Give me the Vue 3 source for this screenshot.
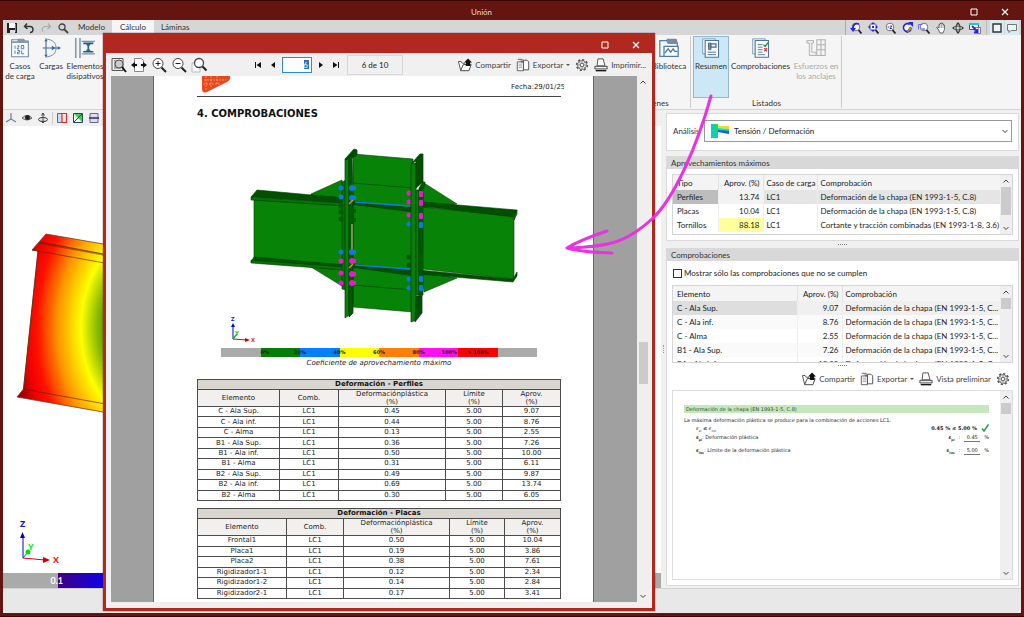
<script setup>
import { ref } from 'vue'

const title = 'Unión'
const onlyFailed = ref(false)
const page = ref('6')

const viewTools = ['zprev', 'zfit', 'zminus2', 'redraw', 'zwin', 'hand', 'orbit', 'export']
const sceneTools = ['axes', 'eye', 'turn']
const clipTools = ['clipred', 'clipgreen', 'clipblue']
const pageTools = [
  ['pageview', 'Página completa'],
  ['pagewidth', 'Ancho de página'],
  ['zin', 'Acercar'],
  ['zout', 'Alejar'],
  ['zpage', 'Zoom'],
]

const summary = [
  { tipo: 'Perfiles', aprov: '13.74', caso: 'LC1', comp: 'Deformación de la chapa (EN 1993-1-5, C.8)' },
  { tipo: 'Placas', aprov: '10.04', caso: 'LC1', comp: 'Deformación de la chapa (EN 1993-1-5, C.8)' },
  { tipo: 'Tornillos', aprov: '88.18', caso: 'LC1', comp: 'Cortante y tracción combinadas (EN 1993-1-8, 3.6)' },
]

const checks = [
  ['C - Ala Sup.', '9.07'],
  ['C - Ala inf.', '8.76'],
  ['C - Alma', '2.55'],
  ['B1 - Ala Sup.', '7.26'],
  ['B1 - Ala inf.', '10.00'],
]

const reports = [
  {
    name: 'Deformación - Perfiles',
    kind: 'profiles',
    rows: [
      ['C - Ala Sup.', '0.45', '9.07'],
      ['C - Ala inf.', '0.44', '8.76'],
      ['C - Alma', '0.13', '2.55'],
      ['B1 - Ala Sup.', '0.36', '7.26'],
      ['B1 - Ala inf.', '0.50', '10.00'],
      ['B1 - Alma', '0.31', '6.11'],
      ['B2 - Ala Sup.', '0.49', '9.87'],
      ['B2 - Ala inf.', '0.69', '13.74'],
      ['B2 - Alma', '0.30', '6.05'],
    ],
  },
  {
    name: 'Deformación - Placas',
    kind: 'plates',
    rows: [
      ['Frontal1', '0.50', '10.04'],
      ['Placa1', '0.19', '3.86'],
      ['Placa2', '0.38', '7.61'],
      ['Rigidizador1-1', '0.12', '2.34'],
      ['Rigidizador1-2', '0.14', '2.84'],
      ['Rigidizador2-1', '0.17', '3.41'],
    ],
  },
]

const bolts = [
  [341, 188, 'b'], [341, 197, 'b'], [341, 206, 'd'], [341, 212, 'd'], [341, 219, 'd'], [341, 252, 'b'], [341, 261, 'p'], [341, 273, 'p'], [341, 283, 'p'],
  [409, 193, 'p'], [409, 202, 'p'], [409, 215, 'p'], [409, 224, 'b'], [409, 257, 'd'], [409, 265, 'd'], [409, 279, 'b'], [409, 288, 'b'],
]
const frontBolts = [
  [352, 188, 'b'], [352, 198, 'b'], [352, 211, 'd'], [352, 220, 'd'], [352, 252, 'b'], [352, 261, 'p'], [352, 274, 'p'], [352, 283, 'p'],
]
const rightBolts = [
  [421, 194, 'p'], [421, 203, 'p'], [421, 216, 'p'], [421, 225, 'b'], [421, 257, 'd'], [421, 266, 'd'], [421, 279, 'b'], [421, 288, 'b'],
]
</script>

<template>
  <div class="window">
    <svg class="sprite" aria-hidden="true">
      <symbol id="save" viewBox="0 0 12 12"><path d="M1 1h10v10H1z" fill="#222" /><path d="M3 1h6v5H3z" fill="#fff" /><path d="M4 8h5v3H4z" fill="#ddd" /><path d="M9 2h1v8H9z" fill="#8a8a20" /></symbol>
      <symbol id="undo" viewBox="0 0 12 12"><path d="M4 1.5 1.5 4.5l3 2.500M2 4.500h5a3 3 0 0 1 0 6" fill="none" stroke="#333" stroke-width="1.400" /></symbol>
      <symbol id="redo" viewBox="0 0 12 12"><path d="M8 1.500l2.500 3-3 2.500M10 4.500H5a3 3 0 0 0-2 5" fill="none" stroke="#aaa" stroke-width="1.200" /></symbol>
      <symbol id="search" viewBox="0 0 12 12"><circle cx="5" cy="5" r="3" fill="none" stroke="#444" stroke-width="1.300" /><path d="M7 7l4 4" stroke="#444" stroke-width="1.800" /></symbol>
      <symbol id="lens" viewBox="0 0 12 12"><circle cx="6" cy="5" r="3.800" fill="#fff" stroke="#777" /><path d="M8.500 8l3 3.500" stroke="#222" stroke-width="1.800" /></symbol>
      <symbol id="zprev" viewBox="0 0 12 12"><use href="#lens" /><path d="M9 2Q3 0 3 7" fill="none" stroke="#22e" stroke-width="1.800" /><path d="M0 6h6L3 10z" fill="#22e" /></symbol>
      <symbol id="zfit" viewBox="0 0 12 12"><use href="#lens" /><path d="M6 0l2 2.500H4zM6 10l2-2.500H4zM1 5l2.500-2v4zM11 5L8.500 3v4zM5 4h2v2H5z" fill="#22e" /></symbol>
      <symbol id="zminus2" viewBox="0 0 12 12"><use href="#lens" /><path d="M3.500 5h2M6 4h2L6 6.500h2" fill="none" stroke="#22e" stroke-width=".9" /></symbol>
      <symbol id="redraw" viewBox="0 0 12 12"><path d="M9 2.500a4 4 0 1 0 1 5" fill="#fff" stroke="#22e" stroke-width="1.600" /><path d="M7 0h5v5z" fill="#22e" /><path d="M5.500 10.500 9 5l2 1.500-4 4z" fill="#c92" stroke="#433" stroke-width=".6" /></symbol>
      <symbol id="zwin" viewBox="0 0 12 12"><use href="#lens" /><path d="M.5 7.500V2.500h4" fill="none" stroke="#55f" stroke-width=".8" /><path d="M3 6h4v2H3z" fill="#99f" /></symbol>
      <symbol id="hand" viewBox="0 0 12 12"><path d="M3 7 1.500 5.500l1-.5L4 6V2.500h1V1.500h1.200V1h1.200v1h1v1h1v4.500L8 11H5z" fill="#fff" stroke="#444" stroke-width=".8" /><path d="M5 3v3M6.500 2v4M8 3v3" stroke="#777" stroke-width=".6" /></symbol>
      <symbol id="orbit" viewBox="0 0 12 12"><ellipse cx="6" cy="6" rx="4.500" ry="2" fill="none" stroke="#444" /><ellipse cx="6" cy="6" rx="2" ry="4.500" fill="none" stroke="#444" /><path d="M6 0l2 2.500H4zM6 12l2-2.500H4zM0 6l2-1.500v3zM12 6l-2-1.500v3z" fill="#333" /></symbol>
      <symbol id="export" viewBox="0 0 12 12"><path d="M.5 1.500h9v6h-9z" fill="#fff" stroke="#459" /><path d="M0 1h10v2H0z" fill="#28c8d0" /><path d="M5.500 5.500h6v6h-6z" fill="#fff" stroke="#555" stroke-width=".7" /><path d="M3 4l5 5" stroke="#22e" stroke-width="1.800" /><path d="M9.500 6v5h-5z" fill="#22e" /></symbol>
      <symbol id="panel" viewBox="0 0 12 12"><path d="M2 2h8v8H2z" fill="#eef4f6" stroke="#333" stroke-width="1.400" /></symbol>
      <symbol id="chat" viewBox="0 0 12 12"><path d="M1.500 2.500h9v6H5L3 10.500v-2H1.500z" fill="#edf5f8" stroke="#777" /></symbol>
      <symbol id="cases" viewBox="0 0 24 24"><path d="M2 22.500V2h8l2 2h10v18.500z" fill="#fff" stroke="#6a8cb0" stroke-width="1.300" /><path d="M9 1h8l1 2h4v3H2V4h7z" fill="#8498ac" /><path d="M6 9v4M8.500 9.500h2.500L8.500 13H11M13.500 9h3v4h-3zM6 15v4M9 15h2.500v2H9v2h2.500M14 15v4h3" fill="none" stroke="#2868a8" /></symbol>
      <symbol id="loads" viewBox="0 0 24 24"><path d="M5 1C15 2 18 6 18 12S15 22 5 23" fill="none" stroke="#7890a8" stroke-width="1.200" /><path d="M6 2v20M2 12h20" stroke="#38699c" stroke-width="1.300" /><path d="M4 4l2-3 2 3zM4 20l2 3 2-3zM20 10l4 2-4 2zM13 9l4 3-4 3z" fill="#38699c" /></symbol>
      <symbol id="damper" viewBox="0 0 24 24"><path d="M1 0v24M6 0v24" stroke="#5c7890" stroke-width="1.400" /><path d="M8 4h16M8 19h16" stroke="#7e91a3" stroke-width="1.300" /><path d="M10 6.500h12M10 16.500h12" stroke="#205590" stroke-width="2" /><path d="M13 7h6l-2 3v3l2 3h-6l2-3v-3z" fill="#2c679e" /></symbol>
      <symbol id="library" viewBox="0 0 24 24"><path d="M1 22V3h8l2 3h11v16z" fill="#f2f8fc" stroke="#537fa9" stroke-width="1.500" /><path d="M9 1h12l2 6H11z" fill="#788b9e" /><path d="M6 10h17v12H6z" fill="#fff" stroke="#4c7aa5" stroke-width="1.500" /><path d="M7 18l4-5 3 4 3-4 2 3h3" fill="none" stroke="#47779d" stroke-width="1.500" /></symbol>
      <symbol id="sheet" viewBox="0 0 24 24"><path d="M2 1h15v18H2z" fill="#eef5fa" stroke="#7790a9" /><path d="M5 3h16v20H5z" fill="#fff" stroke="#4c7398" stroke-width="1.300" /></symbol>
      <symbol id="summary" viewBox="0 0 24 24"><use href="#sheet" /><path d="M9 6h3v8H9z" fill="#7991aa" stroke="#3f6085" /><path d="M12 7h6v4h-6z" fill="#fff" stroke="#43698f" stroke-width="1.400" /><path d="M8 17h10M8 20h10" stroke="#4c7398" stroke-width="1.200" /></symbol>
      <symbol id="checks" viewBox="0 0 24 24"><use href="#sheet" /><path d="M8 8h6M8 11h6M8 14h6M8 17h6M8 20h9" stroke="#637f9a" stroke-width="1.200" /><path d="M15 8l2 2 4-5" fill="none" stroke="#24a345" stroke-width="1.800" /><path d="M16 12l3 4M19 12l-3 4" stroke="#dc2c36" stroke-width="1.500" /></symbol>
      <symbol id="anchor" viewBox="0 0 24 24"><path d="M1 3h8v3H7v11h5v4H4V6H1z" fill="#eee" stroke="#aaa" /><path d="M13 2h10v19H13zM18 2v19M13 8h10M13 14h10" fill="none" stroke="#b0b0b0" stroke-width="1.300" /></symbol>
      <symbol id="axes" viewBox="0 0 12 12"><path d="M6 1v6l5 3M6 7l-5 3" fill="none" stroke="#68818f" stroke-width="1.200" /></symbol>
      <symbol id="eye" viewBox="0 0 12 12"><path d="M1 6q5-5 10 0-5 4-10 0" fill="#ccc" stroke="#444" stroke-width=".8" /><circle cx="6.500" cy="5.500" r="2.500" fill="#222" /></symbol>
      <symbol id="turn" viewBox="0 0 12 12"><ellipse cx="6" cy="7.500" rx="4.500" ry="2" fill="none" stroke="#333" /><path d="M6 1v9M4.500 3.500 6 1l1.500 2.500M4 9l2 2 2-2" fill="none" stroke="#444" /></symbol>
      <symbol id="clipred" viewBox="0 0 12 12"><path d="M1.500 1.500h9v9h-9z" fill="#cde" stroke="#569" /><path d="M6 1.500h4.500v9H6z" fill="#fee" stroke="#e22" stroke-width="1.200" /></symbol>
      <symbol id="clipgreen" viewBox="0 0 12 12"><path d="M1.500 1.500h9v9h-9z" fill="#fff" stroke="#246" /><path d="M10 2v8L2 2z" fill="#4c5" /><path d="M2 10l8-8" stroke="#246" /></symbol>
      <symbol id="clipblue" viewBox="0 0 12 12"><path d="M2 1.500h8v9H2z" fill="#dde" stroke="#669" /><path d="M1 6h10" stroke="#338" stroke-width="1.600" /></symbol>
      <symbol id="zin" viewBox="0 0 16 16"><circle cx="7" cy="6.500" r="5" fill="#fff" stroke="#444" /><path d="M4.500 6.500h5M7 4v5" stroke="#222" /><path d="M10.500 10.500l4.500 4.500" stroke="#222" stroke-width="2" /></symbol>
      <symbol id="zout" viewBox="0 0 16 16"><circle cx="7" cy="6.500" r="5" fill="#fff" stroke="#444" /><path d="M4.500 6.500h5" stroke="#222" /><path d="M10.500 10.500l4.500 4.500" stroke="#222" stroke-width="2" /></symbol>
      <symbol id="zpage" viewBox="0 0 16 16"><path d="M1 6h8v9H1z" fill="#fff" stroke="#bbb" /><circle cx="8" cy="6" r="4.500" fill="#fff" stroke="#444" stroke-width="1.300" /><path d="M11.500 9.500l4 4" stroke="#222" stroke-width="2" /></symbol>
      <symbol id="pageview" viewBox="0 0 16 16"><path d="M1 1.500h11v12H1z" fill="#eee" stroke="#555" /><path d="M3 3h7v9H3z" fill="#aaa" /><circle cx="8" cy="7" r="4" fill="#ccc" stroke="#555" /><path d="M11 10l4 5" stroke="#111" stroke-width="2" /></symbol>
      <symbol id="pagewidth" viewBox="0 0 16 16"><path d="M3.500 6V1.500h7l2 2V6M3.500 10v4.500h9V10" fill="#fff" stroke="#888" /><path d="M0 8l4-3v2h2v2H4v2zM16 8l-4-3v2h-2v2h2v2z" fill="#111" /></symbol>
      <symbol id="share" viewBox="0 0 16 16"><path d="M3 14 .5 4h3l1.500 2h3" fill="#fff" stroke="#444" /><path d="M3 14.500l3-7h9l-2.500 7z" fill="#fff" stroke="#333" /><path d="M9 9V5H7l4.500-4.500L16 5h-2v4z" fill="#111" /></symbol>
      <symbol id="copy" viewBox="0 0 16 16"><path d="M1.500 4.500h7v10h-7z" fill="#fff" stroke="#555" /><path d="M8.500 2.500h4l2 2v9h-6z" fill="#fff" stroke="#444" /><path d="M3 7h4M3 9h4M3 11h4" stroke="#999" /><path d="M2 1.500h5v3M5 3l2 2 2-2" fill="none" stroke="#555" /></symbol>
      <symbol id="gear" viewBox="0 0 16 16"><circle cx="8" cy="8" r="6" fill="#eee" stroke="#555" stroke-width="2" stroke-dasharray="2.600 2" /><circle cx="8" cy="8" r="5" fill="#e8e8e8" stroke="#777" /><circle cx="8" cy="8" r="2" fill="#fff" stroke="#555" /><path d="M8 3v3M8 10v3M3 8h3M10 8h3M4.500 4.500l2 2M9.500 9.500l2 2M11.500 4.500l-2 2M6.500 9.500l-2 2" stroke="#777" stroke-width=".8" /></symbol>
      <symbol id="print" viewBox="0 0 16 16"><path d="M3.500 9l1-8h6l2 8z" fill="#fff" stroke="#444" /><path d="M1 9.500h14v3H1z" fill="#eee" stroke="#333" /><path d="M2 14.500h12" stroke="#111" stroke-width="1.500" /></symbol>
      <symbol id="max" viewBox="0 0 12 12"><path d="M3 3h6v6H3z" fill="none" stroke="#fff" /></symbol>
      <symbol id="close" viewBox="0 0 12 12"><path d="M3 3l6 6M9 3l-6 6" stroke="#fff" stroke-width="1.200" /></symbol>
      <symbol id="up" viewBox="0 0 12 12"><path d="M3.500 7.500 6 5l2.500 2.500" fill="none" stroke="#444" /></symbol>
      <symbol id="down" viewBox="0 0 12 12"><path d="M3.500 5 6 7.500 8.500 5" fill="none" stroke="#444" /></symbol>
      <symbol id="first" viewBox="0 0 12 12"><path d="M3 3h1v6H3zM9 3v6L4.500 6z" fill="#111" /></symbol>
      <symbol id="prev" viewBox="0 0 12 12"><path d="M8 3v6L4 6z" fill="#111" /></symbol>
      <symbol id="next" viewBox="0 0 12 12"><path d="M4 3v6l4-3z" fill="#111" /></symbol>
      <symbol id="last" viewBox="0 0 12 12"><path d="M3 3v6l4.500-3zM8 3h1v6H8z" fill="#111" /></symbol>
    </svg>

    <header class="titlebar">
      <h1>{{ title }}</h1>
      <div class="winbtns">
        <button aria-label="Maximizar"><svg class="i12"><use href="#max" /></svg></button>
        <button aria-label="Cerrar"><svg class="i12"><use href="#close" /></svg></button>
      </div>
    </header>

    <div class="client">
      <nav class="tabs">
        <button v-for="n in ['save', 'undo', 'redo', 'search']" :key="n" class="quick" :aria-label="n"><svg class="i12"><use :href="'#' + n" /></svg></button>
        <button class="tab">Modelo</button>
        <button class="tab active">Cálculo</button>
        <button class="tab">Láminas</button>
        <div class="viewtools">
          <button v-for="n in viewTools" :key="n" class="quick" :aria-label="n"><svg class="i12"><use :href="'#' + n" /></svg></button>
        </div>
        <button class="toggle" aria-label="Panel"><svg class="i12"><use href="#panel" /></svg></button>
        <button class="toggle" aria-label="Comentarios"><svg class="i12"><use href="#chat" /></svg></button>
      </nav>

      <div class="ribbon">
        <section class="group">
          <div class="tools">
            <button class="rb w34"><svg class="i20"><use href="#cases" /></svg><span>Casos<br />de carga</span></button>
            <button class="rb w28"><svg class="i20"><use href="#loads" /></svg><span>Cargas</span></button>
            <button class="rb w40"><svg class="i20"><use href="#damper" /></svg><span>Elementos<br />disipativos</span></button>
          </div>
        </section>
        <section class="group images">
          <div class="tools end"><button class="rb w40"><svg class="i20"><use href="#library" /></svg><span>Biblioteca</span></button></div>
          <p>Imágenes</p>
        </section>
        <section class="group">
          <div class="tools">
            <button class="rb w36 on"><svg class="i20"><use href="#summary" /></svg><span>Resumen</span></button>
            <button class="rb w64"><svg class="i20"><use href="#checks" /></svg><span>Comprobaciones</span></button>
            <button class="rb w48" disabled><svg class="i20"><use href="#anchor" /></svg><span>Esfuerzos en<br />los anclajes</span></button>
          </div>
          <p>Listados</p>
        </section>
      </div>

      <main class="work">
        <section class="viewport">
          <div class="scenetools">
            <button v-for="n in sceneTools" :key="n" class="quick" :aria-label="n"><svg class="i12"><use :href="'#' + n" /></svg></button>
            <i></i>
            <button v-for="n in clipTools" :key="n" class="quick" :aria-label="n"><svg class="i12"><use :href="'#' + n" /></svg></button>
          </div>
          <div class="scene">
            <svg width="160" height="446" viewBox="3 126 160 446">
              <defs>
                <radialGradient id="stress" gradientUnits="userSpaceOnUse" cx="0" cy="0" r="1" gradientTransform="translate(150 328) scale(138 193)">
                  <stop offset="0.270" stop-color="#208000" /><stop offset="0.380" stop-color="#86b800" /><stop offset="0.500" stop-color="#ffff00" /><stop offset="0.670" stop-color="#ff9400" /><stop offset="0.820" stop-color="#ff1000" /><stop offset="0.900" stop-color="#f00000" /><stop offset="1" stop-color="#980000" />
                </radialGradient>
              </defs>
              <path d="M46 234l120 21v168L17 397l6.500-8L38 251l-6-1z" fill="url(#stress)" stroke="#642" stroke-width=".8" />
              <path d="M40 242l126 24M32 250l134 24M23 389l143 26M38 251L23.500 389" fill="none" stroke="#532800" stroke-width=".8" stroke-opacity=".8" />
              <path d="M40 242l126 23v2L40 244z" fill="#521" opacity=".45" />
              <path d="M23 558v-22" stroke="#0000d0" /><path d="M20 538l2.500-6 2.500 6z" fill="#0000d0" />
              <path d="M23 558l22 2" stroke="#d00" /><path d="M43 557l7 3-7 3z" fill="#c00" />
              <path d="M23 558l5-6" stroke="#073" /><circle cx="28" cy="552" r="2.500" fill="#0d1" />
              <text class="ax" x="20" y="527" fill="#11d">Z</text><text class="ax" x="28" y="550" fill="#0e2">Y</text><text class="ax" x="53" y="563" fill="#e11">X</text>
            </svg>
          </div>
          <div class="scale"><span class="low"><b>0.1</b></span><span class="ramp"></span><span class="rest"></span></div>
        </section>

        <div class="vsplit"><i></i></div>

        <aside class="side">
          <section class="card analysis">
            <label for="analysis">Análisis</label>
            <div class="selectbox">
              <svg width="18" height="14" viewBox="0 0 18 14"><path d="M0 0h7v14H0z" fill="#18d868" /><path d="M0 0h2v14H0zM5 7h2v7H5z" fill="#08c8e8" /><path d="M7 2h11v3L7 4z" fill="#f4e000" /><path d="M7 4l11 1v2H7z" fill="#12e0b0" /><path d="M7 6l11 1v3L7 8z" fill="#1858e8" /></svg>
              <select id="analysis"><option>Tensión / Deformación</option></select>
              <svg class="i12 arrow"><use href="#down" /></svg>
            </div>
          </section>

          <section class="card maxima">
            <h2>Aprovechamientos máximos</h2>
            <div class="gridbox">
              <table class="grid sum">
                <colgroup><col class="c-tipo" /><col class="c-aprov" /><col class="c-caso" /><col /></colgroup>
                <thead><tr><th>Tipo</th><th class="num">Aprov. (%)</th><th>Caso de carga</th><th>Comprobación</th></tr></thead>
                <tbody>
                  <tr v-for="(r, k) in summary" :key="r.tipo" :class="{ sel: k === 0 }"><td>{{ r.tipo }}</td><td class="num" :class="{ warn: k === 2 }">{{ r.aprov }}</td><td>{{ r.caso }}</td><td>{{ r.comp }}</td></tr>
                </tbody>
              </table>
              <div class="scroll"><svg class="i12"><use href="#up" /></svg><i class="tall"></i><svg class="i12"><use href="#down" /></svg></div>
            </div>
          </section>

          <div class="hsplit"><i></i></div>

          <section class="card checkcard">
            <h2>Comprobaciones</h2>
            <label class="only"><input v-model="onlyFailed" type="checkbox" />Mostrar sólo las comprobaciones que no se cumplen</label>
            <div class="gridbox list">
              <table class="grid chk">
                <colgroup><col class="c-elem" /><col class="c-aprov" /><col /></colgroup>
                <thead><tr><th>Elemento</th><th class="num">Aprov. (%)</th><th>Comprobación</th></tr></thead>
                <tbody>
                  <tr v-for="(r, k) in checks" :key="r[0]" :class="{ sel: k === 0 }"><td>{{ r[0] }}</td><td class="num">{{ r[1] }}</td><td>Deformación de la chapa (EN 1993-1-5, C...</td></tr>
                </tbody>
              </table>
              <div class="scroll"><svg class="i12"><use href="#up" /></svg><i></i><svg class="i12"><use href="#down" /></svg></div>
            </div>
            <div class="hsplit"><i></i></div>
            <div class="actions">
              <button><svg class="i14"><use href="#share" /></svg>Compartir</button>
              <button><svg class="i14"><use href="#copy" /></svg>Exportar<em></em></button>
              <button><svg class="i14"><use href="#print" /></svg>Vista preliminar</button>
              <button aria-label="Opciones"><svg class="i14"><use href="#gear" /></svg></button>
            </div>
            <div class="preview">
              <article>
                <h3>Deformación de la chapa (EN 1993-1-5, C.8)</h3>
                <p>La máxima deformación plástica se produce para la combinación de acciones LC1.</p>
                <div class="line"><span><i>ε<sub>pl</sub> ≤ ε<sub>lim</sub></i></span><b>0.45 % ≤ 5.00 %</b><svg width="8" height="8" viewBox="0 0 8 8"><path d="M1 4.500l2 2.500 4.500-6.500" fill="none" stroke="#1da04a" stroke-width="1.500" /></svg></div>
                <div class="line def"><span><b>ε<sub>pl</sub></b>: Deformación plástica</span><b>ε<sub>pl</sub></b><span>:</span><u>0.45</u><span>%</span></div>
                <div class="line def"><span><b>ε<sub>lim</sub></b>: Límite de la deformación plástica</span><b>ε<sub>lim</sub></b><span>:</span><u>5.00</u><span>%</span></div>
              </article>
              <div class="scroll"><svg class="i12"><use href="#up" /></svg><i></i><svg class="i12"><use href="#down" /></svg></div>
            </div>
          </section>
        </aside>
      </main>
      <footer class="status"></footer>
    </div>

    <section class="dialog" role="dialog" aria-label="Listado">
      <header class="dtitle">
        <button aria-label="Maximizar"><svg class="i12"><use href="#max" /></svg></button>
        <button aria-label="Cerrar"><svg class="i12"><use href="#close" /></svg></button>
      </header>
      <div class="dbody">
        <div class="dtools">
          <div class="zooms"><button v-for="[n, t] in pageTools" :key="n" :aria-label="t"><svg class="i16"><use :href="'#' + n" /></svg></button></div>
          <div class="pager">
            <button aria-label="Primera"><svg class="i12"><use href="#first" /></svg></button>
            <button aria-label="Anterior"><svg class="i12"><use href="#prev" /></svg></button>
            <input v-model="page" type="text" aria-label="Página" />
            <button aria-label="Siguiente"><svg class="i12"><use href="#next" /></svg></button>
            <button aria-label="Última"><svg class="i12"><use href="#last" /></svg></button>
            <output>6 de 10</output>
          </div>
          <div class="actions">
            <button><svg class="i14"><use href="#share" /></svg>Compartir</button>
            <button><svg class="i14"><use href="#copy" /></svg>Exportar<em></em></button>
            <button aria-label="Opciones"><svg class="i14"><use href="#gear" /></svg></button>
            <button><svg class="i14"><use href="#print" /></svg>Imprimir...</button>
          </div>
        </div>
        <div class="viewer">
          <div class="desk">
            <article class="page">
              <div class="pagehead">
                <svg width="40" height="17" viewBox="197 76 40 17"><path d="M202 76h28q1 4-3 6l-20 10q-5 2-5-4z" fill="#e8481c" /><path d="M204 80h22M203 84h18M206 76v14M211 76v12M217 76v8" stroke="#ffb8a0" stroke-width=".6" stroke-dasharray="2 1" /></svg>
                <span>Fecha:29/01/25</span>
              </div>
              <h2>4. COMPROBACIONES</h2>
              <figure>
                <svg width="316" height="200" viewBox="221 143 316 200">
                  <g stroke="#043a04" stroke-width=".6" stroke-linejoin="round">
                    <path d="M311 194l31-14v18l-31-3zM311 267l31 19v-16z" fill="#078007" />
                    <path d="M424 183l33 21-35 4zM424 292l33-14-35-5z" fill="#078007" />
                    <path d="M254 199l90 4v64l-90-5z" fill="#078407" />
                    <path d="M251 197l6-7 88 8v5z" fill="#005000" /><path d="M251 197l94 6v3l-94-6z" fill="#067206" />
                    <path d="M251 262l3-5 91 8v4z" fill="#005800" /><path d="M251 260l94 7v3l-94-7z" fill="#067206" />
                    <path d="M353 154l60 5v153l-60-5z" fill="#078407" />
                    <path d="M353 183l60 5M353 285l60 5" fill="none" />
                    <path d="M350 204l4-3 59 7v4zM350 267l4-3 61 7v5z" fill="#005000" />
                    <path d="M422 207l92 9v63l-92-10z" fill="#078407" />
                    <path d="M419 206l4-4 94 8-3 7z" fill="#005000" /><path d="M514 216l3-6v4l-3 6z" fill="#067206" />
                    <path d="M419 270l94 9 4-7v4l-4 6-94-8z" fill="#005000" />
                    <path d="M342 182l4-2v110l-4-1z" fill="#067006" />
                  </g>
                  <path d="M355 202l55 4M355 265l55 4" stroke="#087df0" stroke-width="1.500" />
                  <path d="M352 188v95" stroke="#c8bd70" stroke-width="1.200" />
                  <circle v-for="b in bolts" :key="'a' + b" :cx="b[0]" :cy="b[1]" r="2.500" :class="b[2]" />
                  <g stroke="#043a04" stroke-width=".7" stroke-linejoin="round">
                    <path d="M345 159l4-2v158l-4 3z" fill="#078007" />
                    <path d="M345 159l9-10 3 1v5l-8 5z" fill="#005000" />
                    <path d="M349 158v159l4-4V204l-1-50z" fill="#005a00" />
                    <path d="M411 164l5-1v157l-5 2z" fill="#078007" />
                    <path d="M411 164l9-10h3v28l-7 6v-27z" fill="#005000" />
                    <path d="M416 190h3v105h-3z" fill="#078007" />
                    <path d="M416 296h6v17l-7 9z" fill="#005000" />
                    <path d="M419 188l4-6h2l-2 8v105l-4 2z" fill="#005800" />
                  </g>
                  <path d="M352 224v26" stroke="#c8bd90" stroke-width="1.200" />
                  <g v-for="b in frontBolts" :key="'f' + b" :class="b[2]"><circle :cx="b[0]" :cy="b[1]" r="3" /><path :d="`M${b[0] + 2} ${b[1] - 2}h2v4h-2z`" /></g>
                  <g v-for="b in rightBolts" :key="'r' + b" :class="b[2]"><rect :x="b[0] - 2" :y="b[1] - 3" width="4" height="6" rx="1" /></g>
                  <path d="M349 204l4-4M349 268l4-4" stroke="#e09000" stroke-width="1.500" />
                  <path d="M233 339v-12" stroke="#0000d0" /><path d="M231 327l2-4 2 4z" fill="#0000d0" /><path d="M233 339l14 1" stroke="#d00" /><path d="M245 338l5 2-5 2z" fill="#c00" /><path d="M233 339l4-5" stroke="#0b3" stroke-width="1.500" />
                  <text class="sax" x="231" y="321" fill="#11d">Z</text><text class="sax" x="235" y="335" fill="#0c2">Y</text><text class="sax" x="251" y="342" fill="#e11">X</text>
                </svg>
                <div class="ramp8">
                  <span class="g"></span><span class="c1"><b>0%</b></span><span class="c2"><b class="mid">20%</b></span><span class="c3"><b class="mid">40%</b></span><span class="c4"><b class="mid">60%</b></span><span class="c5"><b class="mid">80%</b><b class="end">100%</b></span><span class="c6"><b class="ctr">&gt; 100%</b></span><span class="g"></span>
                </div>
                <figcaption>Coeficiente de aprovechamiento máximo</figcaption>
              </figure>
              <table v-for="t in reports" :key="t.kind" class="report" :class="t.kind">
                <colgroup><col class="k1" /><col class="k2" /><col class="k3" /><col class="k4" /><col class="k5" /></colgroup>
                <thead>
                  <tr><th colspan="5" class="cap">{{ t.name }}</th></tr>
                  <tr><th>Elemento</th><th>Comb.</th><th>Deformaciónplástica<br />(%)</th><th>Límite<br />(%)</th><th>Aprov.<br />(%)</th></tr>
                </thead>
                <tbody><tr v-for="r in t.rows" :key="r[0]"><td>{{ r[0] }}</td><td>LC1</td><td>{{ r[1] }}</td><td>5.00</td><td>{{ r[2] }}</td></tr></tbody>
              </table>
            </article>
          </div>
          <div class="scroll doc"><svg class="i12"><use href="#up" /></svg><i></i><svg class="i12"><use href="#down" /></svg></div>
        </div>
      </div>
    </section>

    <svg class="callout" width="160" height="170" viewBox="560 90 160 170" aria-hidden="true">
      <path d="M711 96C698 143 675 198 652 219S613 247 567 248M607 231Q580 240 567 248Q580 252 612 253" fill="none" stroke="#e832e4" stroke-width="3" stroke-linecap="round" stroke-linejoin="round" />
    </svg>
  </div>
</template>

<style>
body { margin: 0; }
</style>

<style scoped>
* { box-sizing: border-box; }
.window { position: relative; height: 100vh; display: flex; flex-direction: column; padding: 0 3px 3px; background: #64150f; border: 1px solid #3c0604; border-width: 1px 0; font: 8px/10px Lato, "Open Sans", sans-serif; color: #333; overflow: hidden; }
.sprite { position: absolute; width: 0; height: 0; }
h1, h2, h3, p, figure { margin: 0; font: inherit; }
button { border: 0; padding: 0; margin: 0; background: none; font: inherit; color: inherit; display: flex; align-items: center; justify-content: center; }
svg { display: block; flex: none; }
.i12 { width: 12px; height: 12px; }
.i14 { width: 14px; height: 14px; }
.i16 { width: 16px; height: 16px; }
.i20 { width: 20px; height: 20px; }

.titlebar { flex: 0 0 19px; display: flex; align-items: center; color: #fff; }
.titlebar h1 { flex: 1; text-align: center; padding-top: 2px; color: #e8d8d5; }
.winbtns { display: flex; gap: 19px; padding: 3px 10px 0 8px; }
.client { flex: 1; min-height: 0; display: flex; flex-direction: column; background: #f0f0f0; }

.tabs { flex: 0 0 15px; display: flex; background: #d6d6d6; padding-right: 2px; }
.quick { width: 17px; }
.tab { padding: 0 7px 2px; }
.tab.active { background: #f5f5f5; width: 42px; }
.viewtools { display: flex; margin-left: auto; border-left: 1px solid #aaa; border-right: 1px solid #bbb; padding: 0 3px 0 1px; margin-right: 2px; }
.toggle { width: 14px; background: #d8ebf3; margin-left: 1px; }

.ribbon { flex: 0 0 75px; display: flex; background: #f5f5f5; border-bottom: 1px solid #d5d5d5; padding: 1px 0; }
.group { display: flex; flex-direction: column; justify-content: space-between; padding: 0 1px 0 2px; border-right: 1px solid #ccc; }
.group:first-child { border: 0; padding: 0; }
.group p { text-align: center; }
.tools { display: flex; height: 62px; }
.tools.end { justify-content: flex-end; }
.images { flex: 0 0 78px; margin-left: 508px; }
.rb { flex-direction: column; justify-content: flex-start; gap: 3px; padding: 2px 0 0; border: 1px solid transparent; border-width: 0 1px; white-space: nowrap; text-align: center; }
.rb:disabled { color: #aaa; }
.rb.on { background: #cce8f6; border: 1px solid #92b9cf; padding-top: 1px; }
.w28 { width: 28px; } .w34 { width: 34px; } .w36 { width: 36px; } .w40 { width: 40px; } .w48 { width: 48px; } .w64 { width: 63px; }

.work { flex: 1; min-height: 0; display: flex; }
.viewport { flex: 1; min-width: 0; display: flex; flex-direction: column; }
.scenetools { flex: 0 0 16px; display: flex; align-items: center; }
.scenetools .quick { width: 16px; }
.scenetools i { width: 1px; height: 12px; background: #ccc; margin: 0 1px; }
.scene { flex: 1; min-height: 0; background: #fff; overflow: hidden; }
.ax { font: bold 9px "Open Sans", sans-serif; }
.sax { font: bold 6px "Open Sans", sans-serif; }
.scale { flex: 0 0 15px; display: flex; background: #aaa; }
.low { flex: 0 0 55px; text-align: right; color: #fff; white-space: nowrap; font-size: 9px; line-height: 15px; }
.low b { margin-right: -5px; position: relative; z-index: 1; }
.ramp { flex: 0 0 90px; background: linear-gradient(90deg, #400080, #1000e8 50%, #0000ff); }
.vsplit { flex: 0 0 5px; display: flex; align-items: center; justify-content: center; }
.vsplit i { height: 8px; border-left: 1px dotted #999; }
.side { flex: 0 0 355px; display: flex; flex-direction: column; padding: 3px 2px 2px 0; }

.card { background: #fff; border: 1px solid #dadada; }
.card h2 { height: 12px; line-height: 12px; padding-left: 4px; background: #d8d8d8; }
.analysis { height: 38px; display: flex; align-items: center; padding: 0 6px 2px; gap: 6px; margin-bottom: 5px; }
.analysis label { flex: 0 0 25px; overflow: hidden; }
.selectbox { position: relative; flex: 1; height: 22px; border: 1px solid #999; display: flex; align-items: center; padding-left: 6px; }
.selectbox select { appearance: none; flex: 1; align-self: stretch; border: 0; background: none; font: inherit; color: #222; padding: 0 16px 0 5px; }
.arrow { position: absolute; right: 0; pointer-events: none; }
.maxima { padding-bottom: 5px; }
.gridbox { display: flex; margin: 5px 5px 0; border: 1px solid #d5d5d5; overflow: hidden; height: 61px; }
.list { height: 78px; margin-top: 5px; }
.grid { flex: 1; width: 100%; table-layout: fixed; border-collapse: collapse; white-space: nowrap; color: #222; align-self: flex-start; }
.grid th { height: 15px; font-weight: normal; text-align: left; background: #f4f4f4; padding: 0 3px; border-right: 1px solid #e2e2e2; }
.grid td { height: 14px; padding: 0 3px; overflow: hidden; border-right: 1px solid #eee; }
.grid .num { text-align: right; }
.grid tr > :first-child { padding-left: 4px; }
.grid tr > :last-child { border-right: 0; padding-right: 0; }
.sum .sel td { background: #e5e5e5; }
.sum .sel td:first-child { background: #bdbdbd; }
.sum .sel .num { background: #f2f2f2; }
.sum .num.warn { background: #ffff9c; }
.chk tr:nth-child(even) td { background: #fafafa; }
.chk .sel td { background: #f0f0f0; }
.chk .sel td:first-child { background: #dedede; }
.c-tipo { width: 45px; } .c-aprov { width: 45px; } .c-caso { width: 54px; } .c-elem { width: 124px; }
.scroll { flex: 0 0 11px; display: flex; flex-direction: column; align-items: center; background: #efefef; }
.scroll i { width: 10px; height: 11px; background: #cbcbcb; }
.scroll i.tall { height: 28px; }
.scroll svg:last-child { margin-top: auto; }
.hsplit { height: 7px; display: flex; justify-content: center; align-items: center; }
.hsplit i { width: 9px; border-top: 1px dotted #777; }
.checkcard { flex: 1; min-height: 0; display: flex; flex-direction: column; padding-bottom: 5px; }
.only { display: flex; align-items: center; gap: 2px; padding: 0 0 0 6px; margin-top: 5px; height: 14px; color: #222; }
.only input { appearance: none; width: 9px; height: 9px; margin: 0; border: 1px solid #333; background: #fff; }
.checkcard > .hsplit { flex: none; height: 5px; }
.checkcard .gridbox { flex: none; }
.actions { display: flex; align-items: center; justify-content: flex-end; gap: 5px; color: #444; }
.actions button { gap: 3px; }
.actions em { border: 2px solid transparent; border-top-color: #555; border-bottom: 0; }
.checkcard .actions { height: 22px; padding-right: 8px; }
.preview { flex: 1; min-height: 0; margin: 0 5px; border: 1px solid #ddd; display: flex; }
.preview article { flex: 1; padding: 14px 11px 0 11px; font: 5px/7px "DejaVu Sans", sans-serif; color: #222; }
.preview h3 { background: #c4e8bc; height: 8px; line-height: 8px; padding-left: 2px; margin-bottom: 4px; color: #2c4a38; }
.preview sub { font-size: 3px; line-height: 0; }
.line { display: flex; align-items: center; padding-left: 12px; height: 8px; gap: 4px; }
.line > span:first-child { flex: 1; }
.line.def { height: 11px; }
.line.def + .def { margin-top: 2px; }
.line > b { font-size: 5px; }
.line u { width: 16px; text-align: center; text-decoration: none; border-bottom: 1px solid #777; }
.status { flex: 0 0 25px; background: #e8e8e8; border-top: 1px solid #d2d2d2; }

.dialog { position: absolute; left: 103px; top: 32px; width: 552px; bottom: 5px; display: flex; flex-direction: column; background: #b0281e; padding: 0 3px 3px; box-shadow: 0 0 1px #600; }
.dtitle { flex: 0 0 20px; display: flex; justify-content: flex-end; align-items: center; gap: 19px; padding: 3px 10px 0 0; }
.dbody { flex: 1; min-height: 0; background: #f0f0f0; display: flex; flex-direction: column; padding: 0 3px 6px 5px; }
.dtools { flex: 0 0 23px; display: flex; align-items: center; gap: 45px; }
.zooms { display: flex; gap: 4px; }
.pager { display: flex; align-items: center; gap: 3px; }
.pager input { width: 30px; height: 16px; border: 1px solid #3089d8; padding: 0 3px; font: inherit; text-align: right; color: #fff; background: linear-gradient(#2472c4, #2472c4) right 2px center / 5px 9px no-repeat #fff; }
.pager output { width: 56px; height: 20px; border: 1px solid #d8d8d8; text-align: center; line-height: 18px; margin-left: 2px; color: #222; }
.dtools .actions { flex: 1; padding-right: 3px; }
.viewer { flex: 1; min-height: 0; display: flex; }
.desk { flex: 1; min-width: 0; background: #a0a0a0; padding: 0 44px 0 43px; overflow: hidden; }
.page { height: 100%; background: #fff; padding: 0 32px 0 43px; overflow: hidden; font: 7px/9px "DejaVu Sans", Verdana, sans-serif; color: #222; box-shadow: 0 0 0 1px #666; }
.pagehead { display: flex; justify-content: space-between; height: 21px; border-bottom: 1px solid #444; }
.pagehead span { width: 53px; overflow: hidden; white-space: nowrap; margin: 7px -3px 0 0; height: 9px; }
.page h2 { font-size: 10px; line-height: 12px; font-weight: bold; color: #111; margin: 11px 0 23px; }
figure { width: 316px; margin-left: 24px; }
.b { fill: #0a78e8; } .p { fill: #e818d0; } .d { fill: #005c00; }
.ramp8 { display: grid; grid-template-columns: repeat(8, 1fr); height: 9px; margin-top: 5px; font-size: 5px; line-height: 9px; color: #222; }
.ramp8 span { position: relative; }
.ramp8 b { position: absolute; white-space: nowrap; }
.mid { left: -6px; } .end { right: 1px; } .ctr { left: 9px; }
.g { background: #aaa; } .c1 { background: #007f00; } .c2 { background: #0080ff; } .c3 { background: #ff0; } .c4 { background: #ff8000; } .c5 { background: #ff10f0; } .c6 { background: #f00; }
figcaption { text-align: center; font-size: 7px; line-height: 12px; font-style: italic; }
.report { width: 100%; table-layout: fixed; border-collapse: collapse; text-align: center; margin-top: 10px; height: 122px; }
.report + .report { margin-top: 7px; height: 91px; }
.report th, .report td { border: 1px solid #4c4c4c; padding: 0; line-height: 9px; }
.report th { font-weight: normal; line-height: 8px; background: #f1f0ee; }
.report th.cap { font-weight: bold; background: #d9d6d0; color: #111; line-height: 9px; }
.profiles .k1 { width: 82px; } .profiles .k2 { width: 59px; } .profiles .k3 { width: 107px; } .profiles .k4 { width: 57px; }
.plates .k1 { width: 89px; } .plates .k2 { width: 57px; } .plates .k3 { width: 106px; } .plates .k4 { width: 55px; }
.scroll.doc i { width: 9px; height: 42px; margin-top: 254px; }
.callout { position: absolute; left: 560px; top: 89px; pointer-events: none; }
</style>
